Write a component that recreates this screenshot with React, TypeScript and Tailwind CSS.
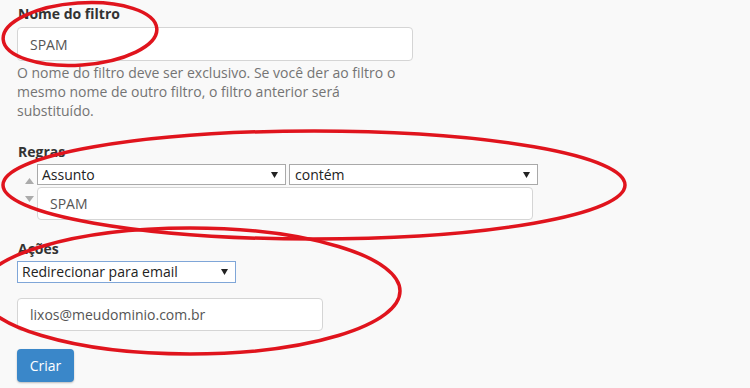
import React from "react";

const Arrow = () => (
  <svg width="7" height="6" viewBox="0 0 7 6" className="shrink-0">
    <path d="M0 0 L7 0 L3.5 6 Z" fill="#222" />
  </svg>
);

function FakeSelect({
  label,
  className,
}: {
  label: string;
  className: string;
}) {
  return (
    <div
      className={`flex items-center justify-between bg-white text-[14px] text-[#222] leading-[20px] ${className}`}
    >
      <span>{label}</span>
      <Arrow />
    </div>
  );
}

export default function App() {
  return (
    <div
      className="relative w-[750px] h-[388px] overflow-hidden bg-[#f9f9f9] px-[17px] text-[14px] text-[#333]"
      style={{ fontFamily: '"Open Sans", "Noto Sans", sans-serif' }}
    >
      <div className="pt-[4px] font-bold leading-[20px] pl-[1px]">Nome do filtro</div>
      <div className="mt-[3px] flex h-[34px] w-[396px] items-center rounded-[4px] border border-[#d5d5d5] bg-white px-[12px] text-[#555]">
        SPAM
      </div>
      <p className="mt-[2px] w-[396px] leading-[19px] text-[#747474]">
        O nome do filtro deve ser exclusivo. Se você der ao filtro o mesmo nome de outro filtro, o filtro anterior será substituído.
      </p>

      <div className="mt-[22px] font-bold leading-[20px] pl-[1px]">Regras</div>
      <div className="mt-[2px] flex">
        <div className="flex w-[20px] flex-col items-center pt-[14px] pl-[4px]">
          <svg width="9" height="6" viewBox="0 0 9 6">
            <path d="M0 6 L9 6 L4.5 0 Z" fill="#ababab" />
          </svg>
          <svg width="9" height="6" viewBox="0 0 9 6" className="mt-[12px]">
            <path d="M0 0 L9 0 L4.5 6 Z" fill="#ababab" />
          </svg>
        </div>
        <div className="flex flex-col">
          <div className="flex gap-[3px]">
            <FakeSelect
              label="Assunto"
              className="h-[21px] w-[249px] border border-[#a9a9a9] pl-[4px] pr-[7px]"
            />
            <FakeSelect
              label="contém"
              className="h-[21px] w-[249px] border border-[#a9a9a9] pl-[5px] pr-[7px]"
            />
          </div>
          <div className="mt-[2px] flex h-[33px] w-[496px] items-center rounded-[4px] border border-[#d5d5d5] bg-white px-[12px] text-[#555]">
            SPAM
          </div>
        </div>
      </div>

      <div className="mt-[19px] font-bold leading-[20px] pl-[1px]">Ações</div>
      <FakeSelect
        label="Redirecionar para email"
        className="mt-[2px] h-[22px] w-[219px] border border-[#7fa6d8] pl-[4px] pr-[7px]"
      />
      <div className="mt-[15px] flex h-[33px] w-[306px] items-center rounded-[4px] border border-[#d5d5d5] bg-white px-[12px] text-[#555]">
        lixos@meudominio.com.br
      </div>
      <button className="mt-[18px] flex h-[33px] w-[57px] items-center justify-center rounded-[4px] bg-[#3a87c9] text-white shadow-[0_1px_2px_rgba(0,0,0,0.25)]">
        Criar
      </button>

      <svg
        className="pointer-events-none absolute left-0 top-0"
        width="750"
        height="388"
        viewBox="0 0 750 388"
      >
        <g fill="none" stroke="#e0141d" strokeWidth="3.5">
          <ellipse cx="80" cy="34" rx="77" ry="31" transform="rotate(-4 80 34)" />
          <ellipse cx="314" cy="185" rx="311" ry="54" />
          <ellipse cx="190" cy="291" rx="210" ry="63" />
        </g>
      </svg>
    </div>
  );
}
